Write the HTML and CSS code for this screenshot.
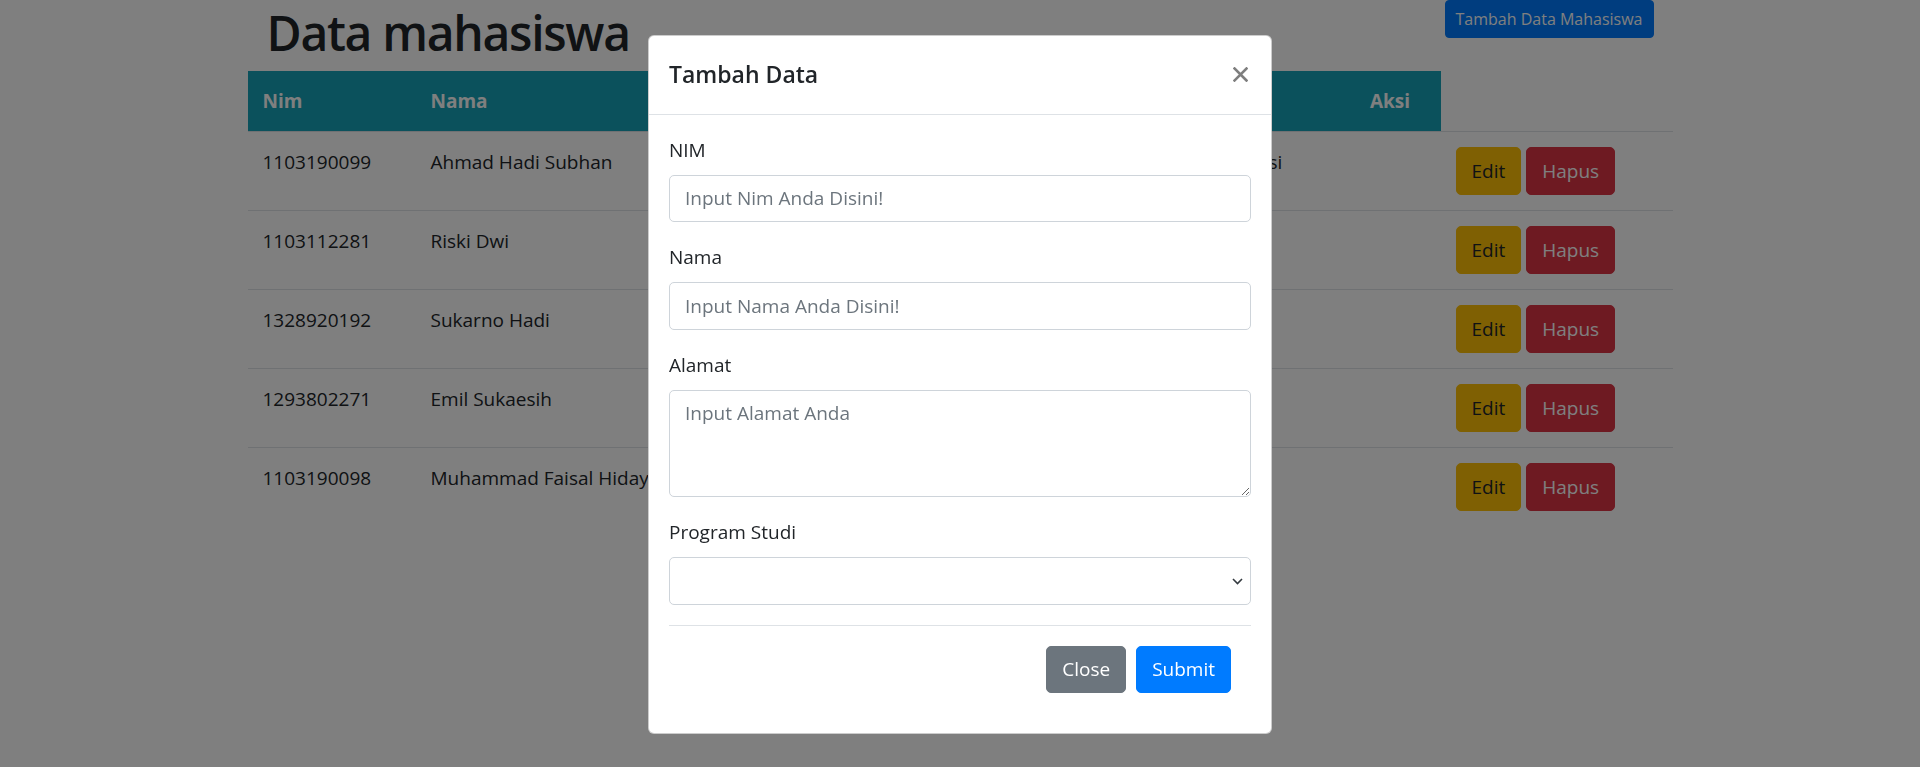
FILE: index.html
```html
<!DOCTYPE html>
<html lang="id">
<head>
<meta charset="utf-8">
<title>Data mahasiswa</title>
<link rel="stylesheet" href="styles.css">
</head>
<body>
<div class="page">
  <div class="topbar">
    <h1 class="title">Data mahasiswa</h1>
    <button class="btn btn-sm btn-primary" type="button">Tambah Data Mahasiswa</button>
  </div>
  <table class="table">
    <colgroup>
      <col class="c-nim"><col class="c-nama"><col class="c-alamat"><col class="c-prodi"><col class="c-aksi"><col class="c-btn">
    </colgroup>
    <thead>
      <tr><th>Nim</th><th>Nama</th><th>Alamat</th><th>Program Studi</th><th class="th-aksi">Aksi</th><th class="th-empty"></th></tr>
    </thead>
    <tbody>
      <tr><td>1103190099</td><td>Ahmad Hadi Subhan</td><td>Jl. Merdeka No. 10</td><td>Sistem Informasi</td><td></td>
        <td><div class="actions"><button class="btn btn-warning" type="button">Edit</button><button class="btn btn-danger" type="button">Hapus</button></div></td></tr>
      <tr><td>1103112281</td><td>Riski Dwi</td><td>Bandung</td><td>Informatika</td><td></td>
        <td><div class="actions"><button class="btn btn-warning" type="button">Edit</button><button class="btn btn-danger" type="button">Hapus</button></div></td></tr>
      <tr><td>1328920192</td><td>Sukarno Hadi</td><td>Jakarta</td><td>Akuntansi</td><td></td>
        <td><div class="actions"><button class="btn btn-warning" type="button">Edit</button><button class="btn btn-danger" type="button">Hapus</button></div></td></tr>
      <tr><td>1293802271</td><td>Emil Sukaesih</td><td>Bogor</td><td>Manajemen</td><td></td>
        <td><div class="actions"><button class="btn btn-warning" type="button">Edit</button><button class="btn btn-danger" type="button">Hapus</button></div></td></tr>
      <tr><td>1103190098</td><td>Muhammad Faisal Hidayat</td><td>Cimahi</td><td>Informatika</td><td></td>
        <td><div class="actions"><button class="btn btn-warning" type="button">Edit</button><button class="btn btn-danger" type="button">Hapus</button></div></td></tr>
    </tbody>
  </table>
</div>

<div class="backdrop">
  <div class="modal">
    <div class="modal-header">
      <h5 class="modal-title">Tambah Data</h5>
      <button class="close" type="button" aria-label="Close">
        <svg width="15" height="15" viewBox="0 0 15 15"><path d="M1.5 1.5L13.5 13.5M13.5 1.5L1.5 13.5" stroke="#000" stroke-width="2.6" stroke-linecap="square" fill="none"/></svg>
      </button>
    </div>
    <div class="modal-body">
      <form>
        <div class="form-group">
          <label for="nim">NIM</label>
          <input id="nim" class="form-control" type="text" placeholder="Input Nim Anda Disini!">
        </div>
        <div class="form-group">
          <label for="nama">Nama</label>
          <input id="nama" class="form-control" type="text" placeholder="Input Nama Anda Disini!">
        </div>
        <div class="form-group">
          <label for="alamat">Alamat</label>
          <textarea id="alamat" class="form-control textarea" rows="3" placeholder="Input Alamat Anda"></textarea>
        </div>
        <div class="form-group">
          <label for="prodi">Program Studi</label>
          <div class="select-wrap">
            <select id="prodi" class="form-control select"><option></option></select>
            <svg class="chevron" width="11" height="7" viewBox="0 0 11 7"><path d="M1 1l4.5 4.5L10 1" stroke="#343a40" stroke-width="1.6" fill="none"/></svg>
          </div>
        </div>
        <div class="modal-footer">
          <button class="btn btn-secondary" type="button">Close</button>
          <button class="btn btn-primary" type="submit">Submit</button>
        </div>
      </form>
    </div>
  </div>
</div>
</body>
</html>
```
FILE: styles.css
```css
html, body {
  margin: 0;
  padding: 0;
}
body {
  font-family: "Open Sans", "Noto Sans", sans-serif;
  font-size: 19px;
  line-height: 30px;
  color: #212529;
  background: #fff;
}

.page {
  width: 1425px;
  margin: 0 auto;
}

.topbar {
  display: flex;
  justify-content: space-between;
  align-items: flex-start;
  padding: 0 19px;
  height: 71px;
}

.title {
  margin: 0;
  padding-top: 3px;
  font-size: 48px;
  line-height: 60px;
  font-weight: 600;
  letter-spacing: -1.3px;
  color: #212529;
}

.btn {
  display: inline-block;
  font-family: inherit;
  font-size: 19px;
  line-height: 30px;
  padding: 7.75px 15px;
  border: 1px solid transparent;
  border-radius: 5px;
  cursor: pointer;
  white-space: nowrap;
}
.btn-sm {
  font-size: 16px;
  line-height: 26.25px;
  padding: 5px 10px;
  border-radius: 4px;
}
.btn-primary { background: #007bff; border-color: #007bff; color: #fff; }
.btn-secondary { background: #6c757d; border-color: #6c757d; color: #fff; }
.btn-warning { background: #ffc107; border-color: #ffc107; color: #212529; }
.btn-danger { background: #dc3545; border-color: #dc3545; color: #fff; }

.table {
  width: 100%;
  border-collapse: collapse;
  table-layout: fixed;
}
.c-nim { width: 168px; }
.c-nama { width: 300px; }
.c-alamat { width: 403px; }
.c-prodi { width: 221px; }
.c-aksi { width: 101px; }
.c-btn { width: 232px; }

.table th,
.table td {
  padding: 15px;
  text-align: left;
  vertical-align: top;
}
.table thead th {
  background: #17a2b8;
  color: #fff;
  font-weight: 700;
}
.table thead .th-aksi { text-align: center; }
.table thead .th-empty { background: transparent; }
.table tbody td {
  border-top: 1px solid #dee2e6;
}

.actions {
  display: flex;
  gap: 5px;
}
.actions .btn {
  padding-top: 8px;
  padding-bottom: 8px;
}

.backdrop {
  position: fixed;
  inset: 0;
  background: rgba(0, 0, 0, 0.5);
  display: flex;
  justify-content: center;
  align-items: flex-start;
  padding-top: 35px;
}

.modal {
  width: 624px;
  box-sizing: border-box;
  background: #fff;
  border: 1px solid rgba(0, 0, 0, 0.2);
  border-radius: 6px;
}

.modal-header {
  display: flex;
  justify-content: space-between;
  align-items: flex-start;
  padding: 20px;
  border-bottom: 1px solid #dee2e6;
}
.modal-title {
  margin: 0;
  font-size: 23px;
  line-height: 37.5px;
  font-weight: 600;
  color: #212529;
}
.close {
  margin: 11px 3px 0 0;
  padding: 0;
  border: 0;
  background: none;
  width: 15px;
  height: 15px;
  opacity: 0.5;
  display: flex;
}

.modal-body {
  padding: 20px;
}
.form-group {
  margin-bottom: 20px;
}
.form-group label {
  display: block;
  margin-bottom: 10px;
  line-height: 30px;
}
.form-control {
  display: block;
  width: 100%;
  box-sizing: border-box;
  height: 47.5px;
  padding: 7.5px 15px;
  font-family: inherit;
  font-size: 19px;
  line-height: 30px;
  color: #495057;
  background: #fff;
  border: 1px solid #ced4da;
  border-radius: 5px;
  margin: 0;
}
.form-control::placeholder {
  color: #6c757d;
  opacity: 1;
}
.textarea {
  height: 107.5px;
  resize: both;
}
.select-wrap {
  position: relative;
}
.select {
  appearance: none;
  -webkit-appearance: none;
}
.chevron {
  position: absolute;
  right: 8px;
  top: 21px;
}

.modal-footer {
  display: flex;
  justify-content: flex-end;
  padding: 15px;
  border-top: 1px solid #dee2e6;
}
.modal-footer .btn {
  margin: 5px;
}
```
